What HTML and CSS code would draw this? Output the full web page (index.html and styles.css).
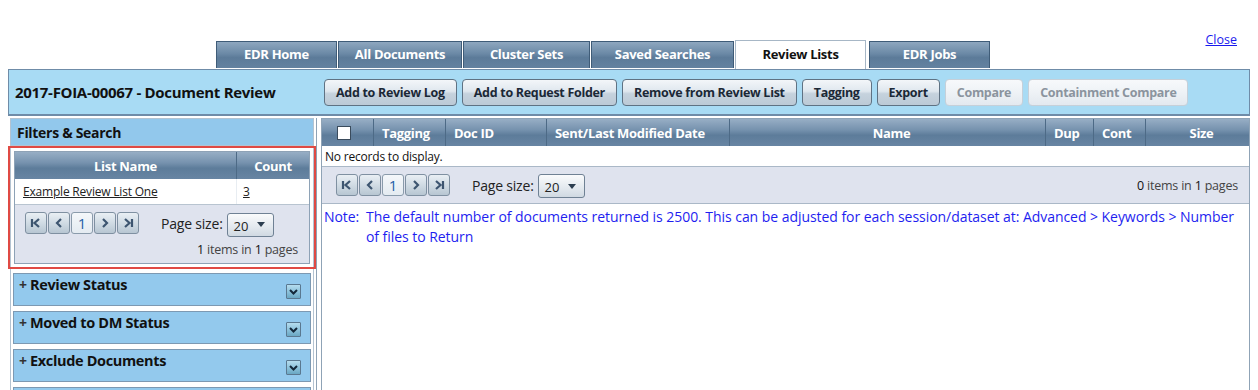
FILE: index.html
```html
<!DOCTYPE html>
<html>
<head>
<meta charset="utf-8">
<link rel="stylesheet" href="styles.css">
</head>
<body>
<div class="top">
  <div class="tabs">
    <div class="tab w121">EDR Home</div>
    <div class="tab w124">All Documents</div>
    <div class="tab w127">Cluster Sets</div>
    <div class="tab w143">Saved Searches</div>
    <div class="tab active">Review Lists</div>
    <div class="tab w121 last">EDR Jobs</div>
  </div>
  <a class="close" href="#">Close</a>
</div>

<div class="header">
  <div class="title">2017-FOIA-00067 - Document Review</div>
  <div class="btns">
    <span class="btn">Add to Review Log</span>
    <span class="btn">Add to Request Folder</span>
    <span class="btn">Remove from Review List</span>
    <span class="btn">Tagging</span>
    <span class="btn">Export</span>
    <span class="btn disabled">Compare</span>
    <span class="btn disabled">Containment Compare</span>
  </div>
</div>

<div class="main">
  <div class="left">
    <div class="left-inner">
      <div class="fs-head">Filters &amp; Search</div>
      <div class="redbox">
        <div class="lgrid">
          <div class="ghead">
            <div class="gc-name">List Name</div>
            <div class="gc-count">Count</div>
          </div>
          <div class="grow">
            <div class="gc-name"><a href="#">Example Review List One</a></div>
            <div class="gc-count"><a href="#">3</a></div>
          </div>
          <div class="lpager">
            <div class="prow">
              <div class="pbtns">
                <span class="pb"><svg width="12" height="10" viewBox="0 0 12 10"><path d="M2 1v8M9 1L4.5 5 9 9" fill="none" stroke="#3d5570" stroke-width="2.2"/></svg></span>
                <span class="pb"><svg width="10" height="10" viewBox="0 0 10 10"><path d="M7 1L3 5l4 4" fill="none" stroke="#3d5570" stroke-width="2.2"/></svg></span>
                <span class="pb cur">1</span>
                <span class="pb"><svg width="10" height="10" viewBox="0 0 10 10"><path d="M3 1l4 4-4 4" fill="none" stroke="#3d5570" stroke-width="2.2"/></svg></span>
                <span class="pb"><svg width="12" height="10" viewBox="0 0 12 10"><path d="M10 1v8M3 1l4.5 4L3 9" fill="none" stroke="#3d5570" stroke-width="2.2"/></svg></span>
              </div>
              <span class="psize">Page size:</span>
              <span class="dd">20<svg width="8" height="5" viewBox="0 0 8 5"><path d="M0 0h8L4 5z" fill="#2c3e50"/></svg></span>
            </div>
            <div class="pinfo"><b>1</b> items in <b>1</b> pages</div>
          </div>
        </div>
      </div>
      <div class="sec"><span class="plus">+</span><span class="sec-t">Review Status</span><span class="exp"><svg width="9" height="6" viewBox="0 0 9 6"><path d="M1 1l3.5 3.5L8 1" fill="none" stroke="#14283a" stroke-width="2"/></svg></span></div>
      <div class="sec"><span class="plus">+</span><span class="sec-t">Moved to DM Status</span><span class="exp"><svg width="9" height="6" viewBox="0 0 9 6"><path d="M1 1l3.5 3.5L8 1" fill="none" stroke="#14283a" stroke-width="2"/></svg></span></div>
      <div class="sec"><span class="plus">+</span><span class="sec-t">Exclude Documents</span><span class="exp"><svg width="9" height="6" viewBox="0 0 9 6"><path d="M1 1l3.5 3.5L8 1" fill="none" stroke="#14283a" stroke-width="2"/></svg></span></div>
      <div class="sec"></div>
    </div>
  </div>

  <div class="right">
    <div class="rhead">
      <div class="hc c-chk"><span class="chk"></span></div>
      <div class="hc c-tag">Tagging</div>
      <div class="hc c-doc">Doc ID</div>
      <div class="hc c-date">Sent/Last Modified Date</div>
      <div class="hc c-name">Name</div>
      <div class="hc c-dup">Dup</div>
      <div class="hc c-cont">Cont</div>
      <div class="hc c-size">Size</div>
    </div>
    <div class="norec">No records to display.</div>
    <div class="rpager">
      <div class="pbtns">
        <span class="pb"><svg width="12" height="10" viewBox="0 0 12 10"><path d="M2 1v8M9 1L4.5 5 9 9" fill="none" stroke="#3d5570" stroke-width="2.2"/></svg></span>
        <span class="pb"><svg width="10" height="10" viewBox="0 0 10 10"><path d="M7 1L3 5l4 4" fill="none" stroke="#3d5570" stroke-width="2.2"/></svg></span>
        <span class="pb cur">1</span>
        <span class="pb"><svg width="10" height="10" viewBox="0 0 10 10"><path d="M3 1l4 4-4 4" fill="none" stroke="#3d5570" stroke-width="2.2"/></svg></span>
        <span class="pb"><svg width="12" height="10" viewBox="0 0 12 10"><path d="M10 1v8M3 1l4.5 4L3 9" fill="none" stroke="#3d5570" stroke-width="2.2"/></svg></span>
      </div>
      <span class="psize">Page size:</span>
      <span class="dd">20<svg width="8" height="5" viewBox="0 0 8 5"><path d="M0 0h8L4 5z" fill="#2c3e50"/></svg></span>
      <span class="rinfo"><b>0</b> items in <b>1</b> pages</span>
    </div>
    <div class="note">
      <span class="note-l">Note:</span>
      <span class="note-t">The default number of documents returned is 2500. This can be adjusted for each session/dataset at: Advanced &gt; Keywords &gt; Number of files to Return</span>
    </div>
  </div>
</div>
</body>
</html>
```

FILE: styles.css
```css
* { box-sizing: border-box; }
html, body { margin: 0; padding: 0; }
body {
  width: 1258px;
  height: 390px;
  overflow: hidden;
  background: #fff;
  font-family: "Open Sans", "Noto Sans", sans-serif;
  color: #111;
}

/* ---------- top tabs ---------- */
.top {
  display: flex;
  align-items: flex-end;
  height: 69px;
  padding-left: 216px;
}
.tabs { display: flex; align-items: flex-end; }
.tab {
  height: 27px;
  margin-right: 1px;
  background: linear-gradient(#8ea7bf, #6b89a6 45%, #5c7b99 60%, #6482a0);
  border: 1px solid #3f5c78;
  border-bottom: none;
  color: #fff;
  font-weight: 700;
  font-size: 13px;
  letter-spacing: -0.3px;
  display: flex;
  align-items: center;
  justify-content: center;
  padding-bottom: 2px;
  margin-bottom: 1px;
}
.w121 { width: 121px; }
.w124 { width: 124px; }
.w127 { width: 127px; }
.w143 { width: 143px; }
.tab.active {
  width: 131px;
  height: 29px;
  margin-bottom: 0;
  background: #fff;
  color: #111;
  border: 1px solid #a7b7c6;
  border-bottom: none;
}
.tab.last { margin-left: 2px; }
.close {
  margin-left: auto;
  align-self: flex-start;
  margin-top: 31px;
  margin-right: 21px;
  color: #1a1aee;
  font-size: 12.5px;
  text-decoration: underline;
}

/* ---------- header bar ---------- */
.header {
  margin: 0 8px;
  height: 47px;
  background: #a8dbf4;
  border: 1px solid #6f8ca8;
  border-bottom: 2px solid #6f8ca8;
  display: flex;
  align-items: center;
  padding-left: 6px;
}
.title {
  font-weight: 700;
  font-size: 15px;
  letter-spacing: -0.3px;
  width: 309px;
  color: #111;
}
.btns { display: flex; gap: 5px; }
.btn {
  height: 27px;
  padding: 0 11px;
  display: flex;
  align-items: center;
  border: 1px solid #5f7283;
  border-radius: 4px;
  background: linear-gradient(#f3f6f9, #dfe7ee 45%, #c5d2dd 55%, #bccad6);
  font-weight: 700;
  font-size: 12.5px;
  letter-spacing: -0.3px;
  color: #1b2836;
}
.btn.disabled {
  border-color: #c6d0d9;
  background: linear-gradient(#f7f9fb, #eef2f6 50%, #e3e9ef);
  color: #8b949e;
}

/* ---------- main area ---------- */
.main {
  display: flex;
  margin: 2px 8px 0 8px;
  height: 300px;
}
.left {
  width: 309px;
  border-right: 1px solid #8fa3b6;
}
.left-inner {
  height: 100%;
  margin-left: 2px;
  margin-right: 2px;
  border-left: 1px solid #b4c3d1;
  border-right: 1px solid #b4c3d1;
  border-top: 1px solid #b4c3d1;
}
.fs-head {
  height: 27px;
  background: #92c8ec;
  font-weight: 700;
  font-size: 14px;
  letter-spacing: -0.3px;
  padding-left: 6px;
  padding-top: 1px;
  display: flex;
  align-items: center;
  border-bottom: 1px solid #b4c3d1;
}
.redbox {
  margin-left: -3px;
  margin-right: -3px;
  border: 2px solid #e04a44;
  padding: 3px 4px 3px 4px;
  height: 123px;
}
.lgrid {
  border: 1px solid #8ea2b6;
  height: 100%;
  display: flex;
  flex-direction: column;
}
.ghead {
  display: flex;
  height: 27px;
  background: linear-gradient(#97aec5, #7692ae 40%, #5d7c9a 60%, #6885a3);
  color: #fff;
  font-weight: 700;
  font-size: 13px;
  letter-spacing: -0.3px;
}
.ghead > div { display: flex; align-items: center; justify-content: center; }
.ghead .gc-name { width: 222px; border-right: 1px solid #4d6a86; }
.ghead .gc-count { flex: 1; }
.grow {
  display: flex;
  height: 26px;
  background: #fff;
  border-bottom: 1px solid #b8c4d0;
  font-size: 12px;
  letter-spacing: -0.2px;
}
.grow > div { display: flex; align-items: center; }
.grow .gc-name { width: 222px; padding-left: 8px; border-right: 1px solid #e8edf2; }
.grow .gc-count { flex: 1; padding-left: 6px; }
.grow a { color: #222; text-decoration: underline; }
.lpager {
  flex: 1;
  background: #dfe3ee;
  padding: 6px 11px 0 10px;
}
.prow { display: flex; align-items: center; height: 24px; }
.pbtns { display: flex; gap: 1px; }
.pb {
  width: 22px;
  height: 22px;
  border: 1px solid #7f90a1;
  border-radius: 3px;
  background: linear-gradient(#e9eff4, #d0dbe4 50%, #b7c6d2);
  display: flex;
  align-items: center;
  justify-content: center;
}
.pb.cur {
  background: linear-gradient(#f4f7fa, #e4ebf1);
  color: #1f5fa8;
  font-size: 15px;
  border-color: #8a9bab;
}
.psize {
  font-size: 14px;
  letter-spacing: -0.2px;
  margin-left: 22px;
  margin-right: 4px;
  color: #222;
}
.dd {
  width: 47px;
  height: 24px;
  margin-top: 3px;
  border: 1px solid #6f8194;
  border-radius: 3px;
  background: linear-gradient(#fafbfc, #e2e8ee 60%, #d0d9e2);
  display: flex;
  align-items: center;
  justify-content: space-between;
  padding: 2px 8px 0 6px;
  font-size: 13px;
  color: #222;
}
.dd svg { margin-top: -2px; }
.pinfo {
  text-align: right;
  font-size: 12.5px;
  letter-spacing: -0.2px;
  color: #444;
  margin-top: 6px;
}
.pinfo b, .rinfo b { font-weight: 400; color: #111; }

.sec {
  margin: 4px 2px 0 2px;
  height: 33px;
  background: #93c9ed;
  border: 1px solid #7d99b2;
  display: flex;
  align-items: flex-start;
  padding: 1px 9px 0 5px;
}
.sec + .sec { margin-top: 5px; }
.plus {
  font-weight: 700;
  font-size: 14px;
  color: #333;
  margin-right: 3px;
  line-height: 20px;
}
.sec-t {
  font-weight: 700;
  font-size: 14.5px;
  letter-spacing: -0.35px;
  line-height: 20px;
  color: #111;
}
.exp {
  margin-left: auto;
  margin-top: 9px;
  width: 15px;
  height: 15px;
  border: 1px solid #5a7890;
  border-radius: 1px;
  background: linear-gradient(#b5dcee, #8ec3dc 50%, #6aa7c3);
  display: flex;
  align-items: center;
  justify-content: center;
}

/* ---------- right grid ---------- */
.right {
  flex: 1;
  margin-left: 4px;
  border-left: 1px solid #8fa3b6;
  border-right: 1px solid #8fa3b6;
  border-top: 1px solid #8fa3b6;
}
.rhead {
  display: flex;
  height: 27px;
  background: linear-gradient(#97aec5, #7692ae 40%, #5d7c9a 60%, #6885a3);
  color: #fff;
  font-weight: 700;
  font-size: 13px;
  letter-spacing: -0.3px;
}
.hc {
  display: flex;
  align-items: center;
  border-right: 1px solid #4d6a86;
  padding-left: 8px;
}
.hc:last-child { border-right: none; }
.c-chk { width: 52px; padding-left: 15px; }
.chk { width: 14px; height: 14px; background: #fff; border: 1px solid #3a4b5c; }
.c-tag { width: 72px; }
.c-doc { width: 101px; }
.c-date { width: 183px; }
.c-name { width: 316px; justify-content: center; }
.c-dup { width: 48px; }
.c-cont { width: 52px; }
.c-size { flex: 1; justify-content: center; }
.norec {
  height: 20px;
  font-size: 12px;
  letter-spacing: -0.2px;
  padding-left: 3px;
  display: flex;
  align-items: center;
  background: #fff;
}
.rpager {
  height: 38px;
  background: #dfe3ee;
  border-top: 1px solid #aab8c7;
  border-bottom: 1px solid #aab8c7;
  display: flex;
  align-items: center;
  padding: 0 11px 0 14px;
}
.rpager .psize { margin-left: 22px; }
.rpager .dd { margin-top: 2px; }
.rinfo {
  margin-left: auto;
  font-size: 12.5px;
  letter-spacing: -0.2px;
  color: #444;
}
.note {
  display: flex;
  padding: 3px 10px 0 2px;
  color: #1e1ef0;
  font-size: 14px;
  letter-spacing: -0.05px;
  line-height: 20px;
}
.note-l { width: 42px; flex: none; }
.note-t { flex: 1; }
```
